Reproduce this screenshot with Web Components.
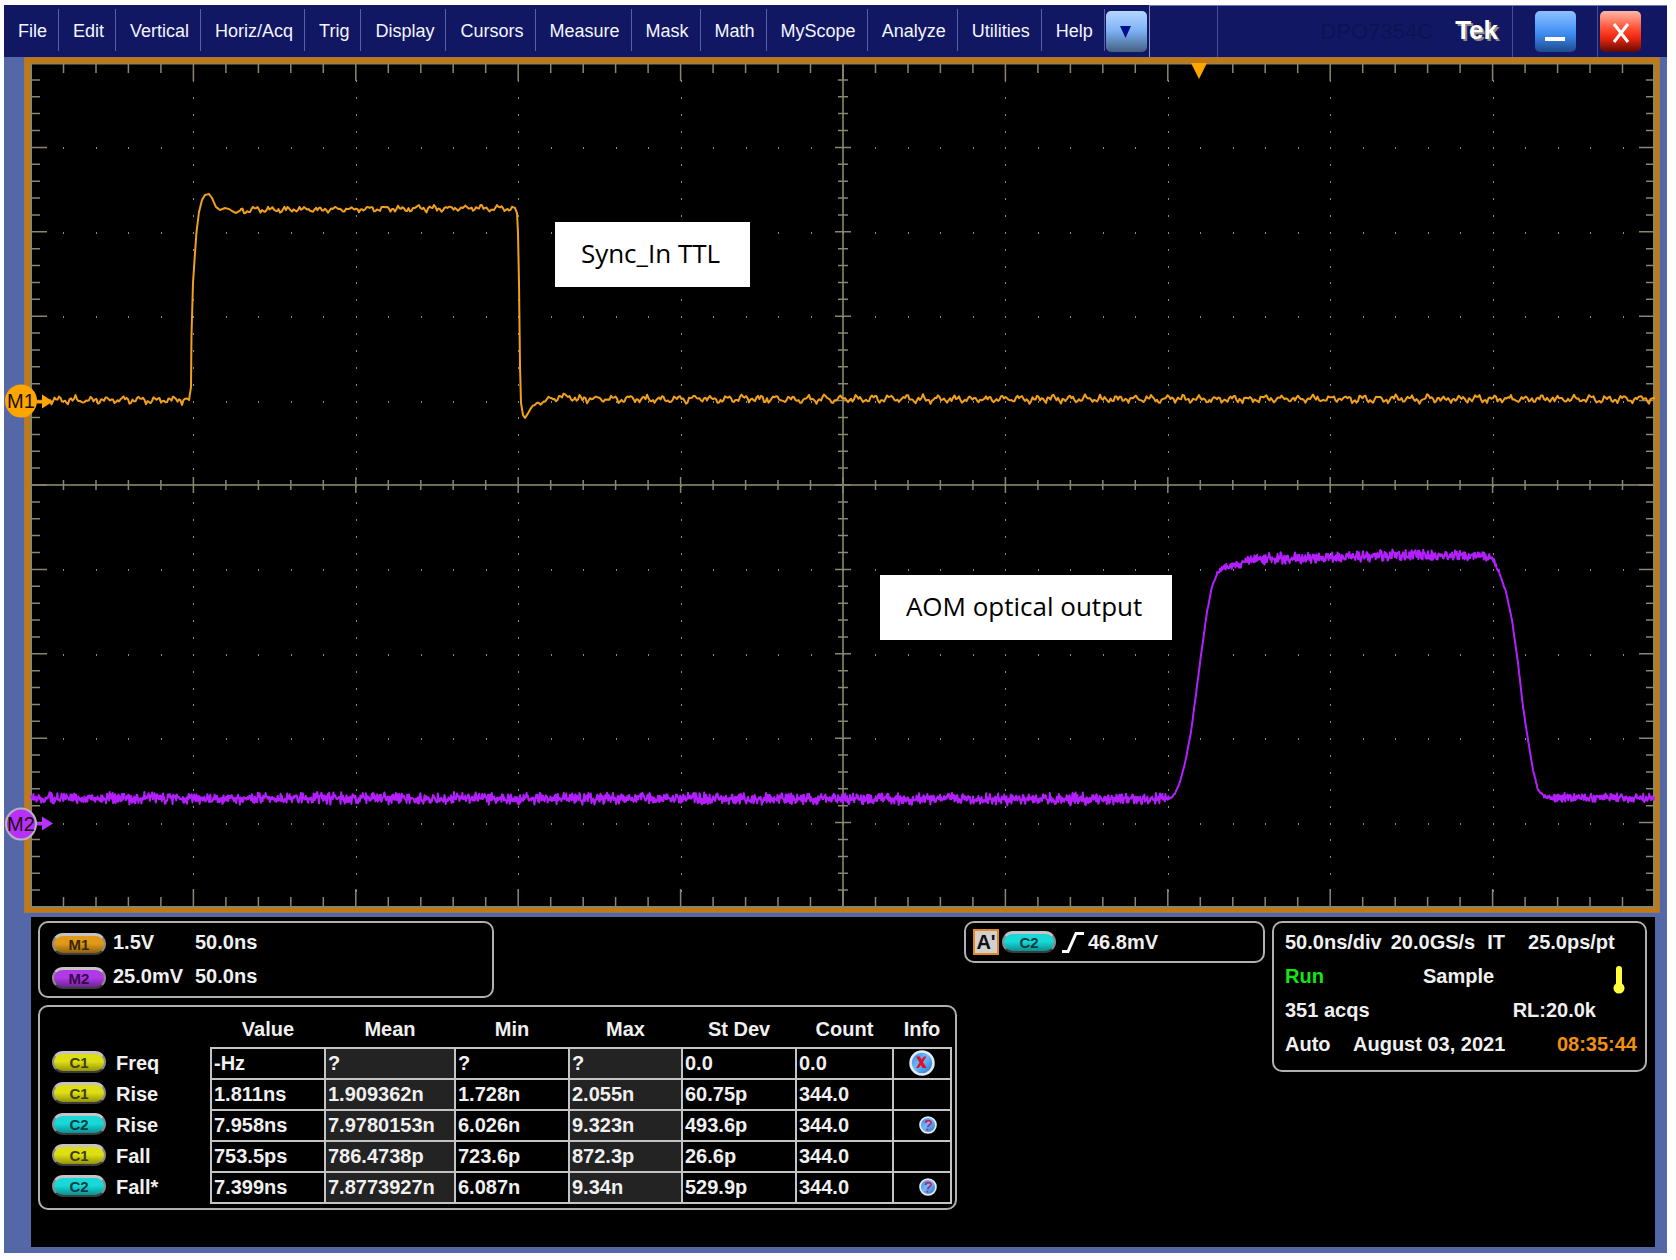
<!DOCTYPE html>
<html lang="en">
<head>
<meta charset="utf-8">
<title>Tek oscilloscope</title>
<style>
  html, body { margin: 0; background: #fff; }
  body { font-family: "Liberation Sans", Arial, sans-serif; }
</style>
</head>
<body>
<scope-app></scope-app>

<script>
const define = (name, html, setup) => {
  const template = document.createElement('template');
  template.innerHTML = html;
  customElements.define(name, class extends HTMLElement {
    constructor() {
      super();
      this.attachShadow({ mode: 'open' }).append(template.content.cloneNode(true));
    }
    connectedCallback() { if (setup) setup(this, this.shadowRoot); }
  });
};

/* Menu entry */
define('menu-item', `
<style>
  :host { display: flex; align-items: center; }
  :host::after { content: ""; width: 1px; height: 42px; background: #5560a8; }
  button { all: unset; padding: 2px 11px 0 14px; font-size: 18px; line-height: 24px; color: #f4f6ff; white-space: nowrap; cursor: default; }
</style>
<button type="button"><slot></slot></button>`);

/* Top bar */
define('menu-bar', `
<style>
  :host { display: flex; height: 52px; background: #111763; color: #fff; }
  nav { display: flex; align-items: stretch; padding-bottom: 2px; }
  button { all: unset; box-sizing: border-box; width: 41px; height: 41px; border-radius: 5px; display: grid; place-items: center; }
  .more { margin: 6px 2px 0 1px; background: linear-gradient(#b4d6ff, #82b5f7 45%, #6f9fdc 60%, #44607f); }
  .rest { flex: 1; display: flex; border-top: 1px solid #6a75b4; border-left: 1px solid #8a94c8; }
  .blank { width: 67px; border-right: 1px solid #454e96; }
  .model { flex: 1; display: flex; align-items: center; justify-content: flex-end; gap: 22px; padding: 0 14px 0 0; border-right: 1px solid #454e96; }
  .name { font-size: 22px; line-height: 26px; color: #0c1254; }
  .logo { font-size: 26px; line-height: 30px; font-weight: bold; text-shadow: 2px 2px 0 #8e8a86; padding-bottom: 3px; }
  .win { display: flex; padding: 5px 0 0; box-sizing: border-box; }
  .min { width: 85px; justify-content: center; border-right: 1px solid #454e96; }
  .close { width: 69px; padding-left: 2px; }
  .min button { background: linear-gradient(#8fc0ff, #4b97f8 45%, #3b86ea 60%, #1d4a8c); }
  .close button { background: linear-gradient(#ffb9a4, #ff4a30 45%, #f02810 65%, #5e0a04); }
  svg { display: block; }
</style>
<nav>
  <menu-item>File</menu-item><menu-item>Edit</menu-item><menu-item>Vertical</menu-item><menu-item>Horiz/Acq</menu-item><menu-item>Trig</menu-item><menu-item>Display</menu-item><menu-item>Cursors</menu-item><menu-item>Measure</menu-item><menu-item>Mask</menu-item><menu-item>Math</menu-item><menu-item>MyScope</menu-item><menu-item>Analyze</menu-item><menu-item>Utilities</menu-item><menu-item>Help</menu-item>
  <button class="more" type="button" aria-label="More menus"><svg width="12" height="14"><path d="M0 1H11L5.500 13Z" fill="#00108c"/></svg></button>
</nav>
<div class="rest">
  <div class="blank"></div>
  <div class="model"><span class="name">DPO7354C</span><span class="logo">Tek</span></div>
  <div class="win min"><button type="button" aria-label="Minimize"><svg width="20" height="18"><rect y="14" width="20" height="4" fill="#fff"/></svg></button></div>
  <div class="win close"><button type="button" aria-label="Close"><svg width="18" height="22"><path d="M2 3L16 21M16 3L2 21" stroke="#fff" stroke-width="3" fill="none"/></svg></button></div>
</div>`);

/* Oval channel tag */
define('channel-pill', `
<style>
  :host { display: inline-grid; place-items: center; box-sizing: border-box; width: 54px; height: 22px; border-radius: 12px; flex: none;
    border: 2px solid #6b6b6b; border-top: 3px solid #c6c2c6; border-left-color: #8c8c8c; border-right-color: #8c8c8c; border-bottom-color: #3c3c3c;
    background: linear-gradient(var(--a), var(--a) 45%, var(--b)); color: var(--t); font: bold 15px/17px "Liberation Sans", Arial, sans-serif; }
  :host([ch="M1"]) { --a: #e09a18; --b: #8f6210; --t: #3a2600; }
  :host([ch="M2"]) { --a: #b03ae6; --b: #6f2396; --t: #35094c; }
  :host([ch="C1"]) { --a: #dede14; --b: #94940c; --t: #3c3c00; }
  :host([ch="C2"]) { --a: #18d8d8; --b: #0c9090; --t: #063c40; }
</style><span></span>`, (el, root) => { root.querySelector('span').textContent = el.getAttribute('ch'); });

/* Caption pinned over the graticule */
define('trace-caption', `
<style>
  :host { display: block; position: absolute; background: #fff; color: #000; padding: 15px 30px 18px 26px; font: 26px/32px "Open Sans", "Noto Sans", sans-serif; white-space: nowrap; }
</style><slot></slot>`);

/* Reference marker of a trace */
define('trace-marker', `
<style>
  :host { display: flex; align-items: center; position: absolute; left: -25px; transform: translateY(-50%); color: var(--c); }
  span { box-sizing: border-box; width: 32px; height: 33px; border-radius: 50%; background: var(--c); border: 2px solid var(--ring, var(--c)); font-size: 20px; line-height: 29px; text-align: center; color: #1a1000; display: flex; justify-content: center; }
  svg { display: block; }
</style><span><slot></slot></span><svg width="16" height="16"><path d="M0 7H5V1L16 8L5 15V10H0Z" fill="currentColor"/></svg>`);

/* Graticule and traces */
define('scope-display', `
<style>
  :host { display: block; position: relative; margin: 0 7px 0 20px; background: #000; border: solid #c27a10; border-width: 6px 5px 5px 6px; outline: 1px solid #9a7a52; outline-offset: -1px; }
  svg.plot { display: block; width: 100%; height: auto; }
  trace-caption.in { left: 32.3%; top: 18.8%; }
  trace-caption.out { left: 52.3%; top: 60.6%; }
  .m1 { top: 40%; --c: #ffa500; }
  .m2 { top: 90%; --c: #b730ff; --ring: #b9b4b9; }
</style>
<svg class="plot" viewBox="0 0 1625 845" role="img" aria-label="Waveforms">
  <g class="grid"></g>
  <path class="t1" fill="none" stroke="#f0a01c" stroke-width="2" stroke-linejoin="round"/>
  <path class="t2" fill="none" stroke="#b41fff" stroke-width="2" stroke-linejoin="round"/>
  <path d="M1161 0H1177L1169 16Z" fill="#ffa500"/>
</svg>
<trace-caption class="in">Sync_In TTL</trace-caption>
<trace-caption class="out">AOM optical output</trace-caption>
<trace-marker class="m1">M1</trace-marker>
<trace-marker class="m2">M2</trace-marker>`, (el, root) => {
  const X0 = 1, DX = 162.4, DY = 84.4, W = 1624, H = 844;
  let lines = '', dots = '';
  const seg = (x1, y1, x2, y2) => { lines += `M${x1.toFixed(1)} ${y1.toFixed(1)}L${x2.toFixed(1)} ${y2.toFixed(1)}`; };
  for (let i = 1; i < 50; i++) {
    const x = X0 + i * DX / 5, y = i * DY / 5, major = i % 5 === 0;
    seg(x, 0, x, major ? 18 : 10);
    seg(x, H, x, H - (major ? 18 : 10));
    seg(x, H / 2 - (major ? 8 : 5), x, H / 2 + (major ? 8 : 5));
    seg(X0, y, X0 + (major ? 16 : 9), y);
    seg(X0 + W, y, X0 + W - (major ? 16 : 9), y);
    seg(X0 + W / 2 - (major ? 8 : 5), y, X0 + W / 2 + (major ? 8 : 5), y);
  }
  for (let d = 1; d < 10; d++) for (let i = 1; i < 50; i++) {
    if (d !== 5) {
      dots += `<rect x="${Math.round(X0 + d * DX)}" y="${Math.round(i * DY / 5)}" width="1" height="2"/>`;
      dots += `<rect x="${Math.round(X0 + i * DX / 5)}" y="${Math.round(d * DY)}" width="1" height="2"/>`;
    }
  }
  root.querySelector('.grid').innerHTML =
    `<path d="M${X0} .5H${X0 + W - 1}V${H}H${X0}Z" fill="none" stroke="#8a8468" stroke-width="2"/>` +
    `<path d="M${X0} ${H / 2}H${W}M${X0 + W / 2} 0V${H}" stroke="#6f6c54" stroke-width="2"/>` +
    `<path d="${lines}" stroke="#8a8570" stroke-width="1.500" fill="none"/><g fill="#8c8c84">${dots}</g>`;

  let seed = 7;
  const rnd = () => ((seed = (seed * 16807) % 2147483647) / 2147483647) * 2 - 1;
  /* keypoints: x, y, noise amplitude used up to the next point */
  const trace = (points, step, noise) => {
    let d = '';
    points.forEach(([x, y, amp], i) => {
      const next = points[i + 1];
      if (!next) { d += `L${x} ${y}`; return; }
      for (let px = x; px < next[0]; px += step) {
        const base = y + (next[1] - y) * (px - x) / (next[0] - x);
        d += `${d ? 'L' : 'M'}${px.toFixed(1)} ${(base + (amp ? noise(px) * amp : 0)).toFixed(1)}`;
      }
    });
    return d;
  };
  root.querySelector('.t1').setAttribute('d', trace([
    [20, 337, 2], [159, 337, 0], [161, 324, 0], [161.5, 272, 0], [163, 220, 0], [165, 190, 0], [166.5, 169, 0], [169, 149, 0],
    [172, 137, 0], [175, 132, 0], [179, 131, 0], [182, 135, 0], [186, 144, 0], [190, 147, 0], [195, 145, 0], [199, 146, 0],
    [202, 148, 0], [206, 150, 0], [211, 147, 1.6], [320, 146, 1.6], [485, 145, 0], [487, 150, 0], [488, 170, 0], [489, 220, 0],
    [490, 303, 0], [491, 340, 0], [493, 352, 0], [495, 355, 0], [500, 347, 1], [506, 340, 1], [514, 339, 1], [520, 335, 2],
    [538, 333, 2], [545, 336, 2], [1625, 336, 0]
  ], 1.500, x => 1.1 * Math.sin(x / 16.3 * 2 * Math.PI) + 0.8 * Math.sin(x / 5.2 * 2 * Math.PI) + 0.7 * rnd()));
  root.querySelector('.t2').setAttribute('d', trace([
    [1, 735, 5], [1100, 736, 5], [1139, 736, 1], [1145, 731, 0.600], [1150, 719, 0.600], [1155, 700, 0.600], [1161, 669, 0.600], [1166, 631, 0.600],
    [1171, 592, 0.600], [1177, 549, 0.600], [1182, 524, 1], [1187, 511, 2], [1192, 505, 3], [1200, 503, 3], [1209, 502, 4], [1216, 498, 4],
    [1226, 496, 5], [1247, 495, 5], [1315, 494, 5], [1383, 492, 5], [1455, 493, 4], [1464, 497, 2.5], [1469, 509, 1], [1476, 529, 0.600],
    [1482, 557, 0.600], [1488, 600, 0.600], [1493, 644, 0.600], [1498, 677, 0.600], [1503, 707, 1], [1508, 727, 1], [1514, 733, 2], [1522, 735, 4],
    [1625, 735, 0]
  ], 0.600, () => (rnd() + rnd()) / 1.5));
});

/* Rounded readout frame */
define('readout-box', `
<style>
  :host { display: block; box-sizing: border-box; border: 2px solid #b0b0b0; border-radius: 10px; background: #000; }
</style><slot></slot>`);

define('math-readout', `
<style>
  :host { display: block; padding: 7px 12px 7px; }
  div { display: grid; grid-template-columns: 54px 75px auto; column-gap: 7px; align-items: center; height: 25px; margin-bottom: 9px; }
  div:last-child { margin-bottom: 0; }
  channel-pill { margin-top: 3px; }
</style>
<div><channel-pill ch="M1"></channel-pill><span>1.5V</span><span>50.0ns</span></div>
<div><channel-pill ch="M2"></channel-pill><span>25.0mV</span><span>50.0ns</span></div>`);

define('info-icon', `
<style>
  :host { display: block; margin: 0 auto; width: 26px; height: 26px; }
  :host([kind="help"]) { width: 18px; height: 18px; margin-right: 11px; }
  svg { display: block; width: 100%; height: 100%; }
  .q, .x { display: none; }
  :host([kind="help"]) .q, :host([kind="error"]) .x { display: inline; }
</style>
<svg viewBox="0 0 26 26">
  <defs><linearGradient id="g" x1="0" y1="0" x2="1" y2="1"><stop offset="0" stop-color="#2e78d8"/><stop offset=".45" stop-color="#6cbcff"/><stop offset="1" stop-color="#2468c0"/></linearGradient></defs>
  <circle cx="13" cy="13" r="11.500" fill="url(#g)" stroke="#e6eaf2" stroke-width="2.500"/>
  <path class="x" d="M7 6.500H11L12.500 9.500L15 6.500H17.500L14 12L17.500 18H13.500L12 15L9.500 18H7L10.500 12.500Z" fill="#e01022"/>
  <path class="q" d="M9.500 10C9.500 5.500 17.500 5.500 17.500 9.500C17.500 12.500 13 12.500 12.500 16M12 18.500V21" fill="none" stroke="#c8205c" stroke-width="2.500"/>
</svg>`);

define('measure-table', `
<style>
  :host { display: block; padding: 8px 3px 4px 12px; }
  table { border-collapse: collapse; table-layout: fixed; width: 899px; font: inherit; line-height: 23px; }
  th { font-weight: bold; padding: 0; }
  thead th { height: 29px; padding-bottom: 3px; }
  tbody th > div { display: flex; align-items: center; gap: 10px; height: 29px; }
  channel-pill { margin-bottom: 3px; }
  tbody th span, td { padding-bottom: 1px; }
  td { border: 2px solid #c4c4c4; height: 31px; padding: 0 2px 1px; box-sizing: border-box; }
  td:nth-child(3), td:nth-child(5) { background: #232323; }
</style>
<table>
  <colgroup><col style="width:159px"><col style="width:114px"><col style="width:130px"><col style="width:114px"><col style="width:113px"><col style="width:114px"><col style="width:97px"><col style="width:58px"></colgroup>
  <thead><tr><th></th><th scope="col">Value</th><th scope="col">Mean</th><th scope="col">Min</th><th scope="col">Max</th><th scope="col">St Dev</th><th scope="col">Count</th><th scope="col">Info</th></tr></thead>
  <tbody></tbody>
</table>`, (el, root) => {
  const rows = [
    ['C1', 'Freq', '-Hz', '?', '?', '?', '0.0', '0.0', 'error'],
    ['C1', 'Rise', '1.811ns', '1.909362n', '1.728n', '2.055n', '60.75p', '344.0', ''],
    ['C2', 'Rise', '7.958ns', '7.9780153n', '6.026n', '9.323n', '493.6p', '344.0', 'help'],
    ['C1', 'Fall', '753.5ps', '786.4738p', '723.6p', '872.3p', '26.6p', '344.0', ''],
    ['C2', 'Fall*', '7.399ns', '7.8773927n', '6.087n', '9.34n', '529.9p', '344.0', 'help']
  ];
  root.querySelector('tbody').innerHTML = rows.map(([ch, name, ...cells]) => {
    const info = cells.pop();
    return `<tr><th scope="row"><div><channel-pill ch="${ch}"></channel-pill><span>${name}</span></div></th>` +
      cells.map(c => `<td>${c}</td>`).join('') + `<td>${info ? `<info-icon kind="${info}"></info-icon>` : ''}</td></tr>`;
  }).join('');
});

define('trigger-readout', `
<style>
  :host { display: flex; align-items: center; height: 38px; padding: 0 7px; }
  .a { box-sizing: border-box; width: 26px; height: 26px; background: #d4d0d0; border: 2px solid #e08a20; color: #111; text-align: center; line-height: 22px; }
  channel-pill { margin: 0 6px 0 3px; }
  svg { display: block; margin-right: 4px; }
</style>
<span class="a">A'</span><channel-pill ch="C2"></channel-pill>
<svg width="22" height="23"><path d="M0 20.500H6L14 2.500H22" fill="none" stroke="#fff" stroke-width="3"/></svg>
<span>46.8mV</span>`);

define('acquisition-readout', `
<style>
  :host { display: grid; gap: 11px; padding: 8px 8px 14px 11px; line-height: 23px; white-space: nowrap; }
  div { display: flex; height: 23px; }
  .rate { gap: 9px; }
  .it { margin: 0 14px 0 3px; }
  .mode { justify-content: space-between; padding-right: 12px; }
  .run { color: #14e614; flex: 0 0 138px; }
  .mode svg { margin: 1px 0 0 auto; }
  .count { justify-content: space-between; padding-right: 41px; }
  .auto { flex: 0 0 68px; }
  .time { color: #f09010; margin-left: auto; }
</style>
<div class="rate"><span>50.0ns/div</span><span>20.0GS/s</span><span class="it">IT</span><span>25.0ps/pt</span></div>
<div class="mode"><span class="run">Run</span><span>Sample</span><svg width="12" height="28"><path d="M3 3a3 3 0 0 1 6 0V17.500a5.500 5.500 0 1 1-6 0Z" fill="#ffff3c"/></svg></div>
<div class="count"><span>351 acqs</span><span>RL:20.0k</span></div>
<div><span class="auto">Auto</span><span>August 03, 2021</span><span class="time">08:35:44</span></div>`);

define('readout-panel', `
<style>
  :host { display: flex; align-items: flex-start; gap: 7px; margin: 4px 12px 6px 27px; padding: 4px 8px 37px 7px; background: #000; color: #f0f0f0; font: bold 20px/23px "Liberation Sans", Arial, sans-serif; }
  .left { display: grid; gap: 7px; justify-items: start; }
  .math { width: 456px; height: 77px; }
  .trigger { flex: 1; }
  .acq { width: 375px; }
</style>
<div class="left">
  <readout-box class="math"><math-readout></math-readout></readout-box>
  <readout-box><measure-table></measure-table></readout-box>
</div>
<readout-box class="trigger"><trigger-readout></trigger-readout></readout-box>
<readout-box class="acq"><acquisition-readout></acquisition-readout></readout-box>`);

define('scope-app', `
<style>
  :host { display: block; padding: 5px 9px 8px 4px; }
  main { display: flow-root; background: #5468a8; }
</style>
<main>
  <menu-bar></menu-bar>
  <scope-display></scope-display>
  <readout-panel></readout-panel>
</main>`);
</script>
</body>
</html>
